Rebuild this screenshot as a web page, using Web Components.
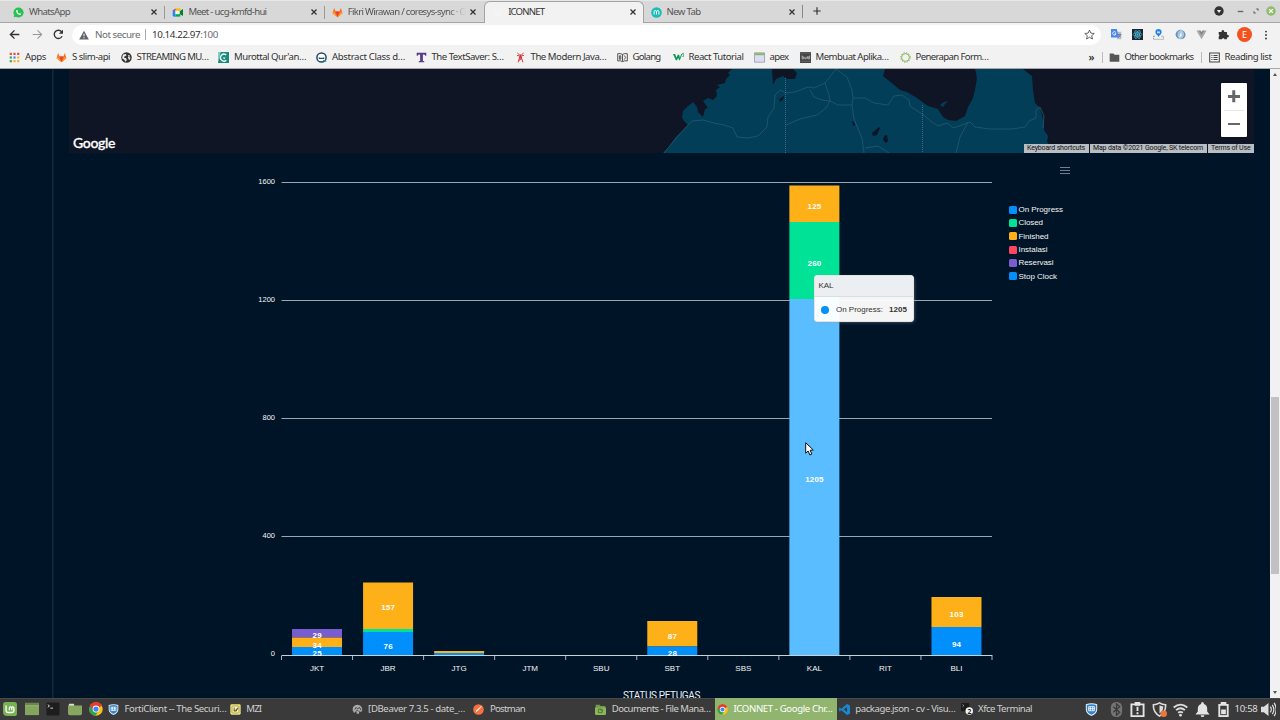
<!DOCTYPE html>
<html lang="en">
<head>
<meta charset="utf-8">
<title>ICONNET</title>
<style>
html,body{margin:0;width:1280px;height:720px;overflow:hidden;background:#001428}
body{font-family:"Noto Sans","Open Sans",sans-serif;font-size:9.6px}
</style>
</head>
<body>
<desktop-screen></desktop-screen>
<script>
const ICONS = {
whatsapp:'<circle cx="8" cy="8" r="7.4" fill="#25c351"/><path d="M1 15l1.200-4L5 14z" fill="#25c351"/><path d="M5.200 4.300c-.8.700-.9 1.800-.2 3.200 1 2 2.500 3.300 4.600 4 1.400.4 2.200-.5 2.100-1.700L9.900 8.900l-.8.900C7.900 9.300 7 8.400 6.400 7.200l.7-.9-.8-2z" fill="#fff"/>',
meet:'<path d="M1 5l4-3v12H3a2 2 0 0 1-2-2z" fill="#2684fc"/><path d="M5 2h7v4H5z" fill="#ffba00"/><path d="M1 5l4-3v3z" fill="#ea4335"/><path d="M5 10h7v4H5z" fill="#00ac47"/><path d="M11 6l5-3v10l-5-3z" fill="#00832d"/><path d="M5 5.500h6v5H5z" fill="#f3f3f3"/>',
gitlab:'<path d="M8 15L.8 9 3 1.500 5.400 6.700h5.200L13 1.500 15.200 9z" fill="#fc6d26"/><path d="M8 15L5.400 6.700h5.200z" fill="#e24329"/><path d="M.8 9l2-2 5.200 8zM15.200 9l-2-2L8 15z" fill="#fca326"/>',
vermillion:'<path d="M3 3l3 10 2-5 2 5 3-10" fill="none" stroke="#f7f7f7" stroke-width="1"/>',
mm:'<circle cx="8" cy="8" r="7.700" fill="#1abcb8"/><path d="M4.500 11V6.800q0-1.600 1.700-1.600T8 6.800V11M8 6.800q0-1.600 1.800-1.600t1.700 1.600V11" fill="none" stroke="#fff" stroke-width="1.400"/>',
x:'<path d="M4 4l8 8M12 4l-8 8" stroke="#333" stroke-width="2.100"/>',
plus:'<path d="M8 2v12M2 8h12" stroke="#333" stroke-width="1.900"/>',
down:'<circle cx="8" cy="8" r="7.500" fill="#333"/><path d="M4.500 6.500h7L8 11z" fill="#eee"/>',
min:'<path d="M4 8h8" stroke="#666" stroke-width="2"/>',
max:'<path d="M7.500 4H12v4.500zM8.500 12H4V7.500z" fill="#666"/>',
close:'<circle cx="8" cy="8" r="7.600" fill="#8fbd6a"/><path d="M5 5l6 6M11 5l-6 6" stroke="#fff" stroke-width="2.200"/>',
back:'<path d="M15 8H2.500M8 2L2 8l6 6" fill="none" stroke="#333" stroke-width="2"/>',
fwd:'<path d="M1 8h12.500M8 2l6 6-6 6" fill="none" stroke="#999" stroke-width="1.700"/>',
reload:'<path d="M13.200 10.500A6 6 0 1 1 12.500 4" fill="none" stroke="#333" stroke-width="2"/><path d="M14.500 1v6h-6z" fill="#333"/>',
warn:'<path d="M8 1l7.700 14H.3z" fill="#5f6368"/><path d="M8 6v4M8 11.500v1.800" stroke="#fff" stroke-width="1.600"/>',
star:'<path d="M8 1.500l2 4.500 4.900.5-3.700 3.300 1.100 4.800L8 12.100l-4.300 2.500 1.100-4.800L1.100 6.500 6 6z" fill="none" stroke="#555" stroke-width="1.300"/>',
translate:'<path d="M7 4h8v11H9z" fill="#b7bfc9"/><path d="M0 0h8.500l3 12.500H0z" fill="#4c88ed"/><path d="M7 5A2.500 2.500 0 1 0 7.300 7H5" fill="none" stroke="#fff" stroke-width="1.200"/><path d="M10 8h5M12.500 7v1M14 8q-1 3-3 4M11 9l3 3" stroke="#5b6b80" fill="none"/>',
react:'<path d="M0 0h16v16H0z" fill="#1f2330"/><g fill="none" stroke="#45c8e6" stroke-width="1"><ellipse cx="8" cy="8" rx="6.500" ry="2.500"/><ellipse cx="8" cy="8" rx="6.500" ry="2.500" transform="rotate(60 8 8)"/><ellipse cx="8" cy="8" rx="6.500" ry="2.500" transform="rotate(120 8 8)"/></g><circle cx="8" cy="8" r="1.300" fill="#45c8e6"/>',
pin:'<circle cx="8" cy="4.500" r="4.500" fill="#1d82e8"/><path d="M6 8.500h4l-2 3z" fill="#1d82e8"/><path d="M7 2.500v4M9 3v3.500M6 5h4" stroke="#fff" stroke-width=".9"/><path d="M.8 10.500h3M12 10.500h3.200M.8 10v5h14.400v-5" fill="none" stroke="#777" stroke-dasharray="2 1"/>',
swirl:'<circle cx="8" cy="8" r="7" fill="#a9c5dc"/><path d="M9 1C3 3 2 9 6 14 3 13 1 11 1 8s3-7 8-7zM10 2c5 3 4 10-2 13 6 0 8-5 7-8-.6-2.500-2-4-5-5z" fill="#5f94bd"/><path d="M9 4l-3 8 4-2z" fill="#eef6fb"/>',
vue:'<path d="M.5 2H5l3 5 3-5h4.500L8 14.800z" fill="#a8a8a8"/><path d="M4 2h2.600L8 4.400 9.400 2H12L8 9z" fill="#858585"/>',
puzzle:'<path d="M1 4.500h4.300a2 2 0 1 1 3.600 0H13v4a2 2 0 1 1 0 3.600V15H9.500a2 2 0 0 0-3.800 0H1v-4a2 2 0 0 0 0-3.500z" fill="#333"/>',
dots:'<g fill="#333"><circle cx="8" cy="2.500" r="1.500"/><circle cx="8" cy="8" r="1.500"/><circle cx="8" cy="13.500" r="1.500"/></g>',
apps:'<g><path d="M1 1h3.200v3.200H1zM6.400 1h3.200v3.200H6.400zM11.800 1H15v3.200h-3.200z" fill="#e35245"/><path d="M1 6.400h3.200v3.200H1z" fill="#36a852"/><path d="M6.400 6.400h3.200v3.200H6.400z" fill="#4688f1"/><path d="M11.800 6.400H15v3.200h-3.200zM6.400 11.800h3.200V15H6.400zM11.800 11.800H15V15h-3.200z" fill="#f0b52e"/><path d="M1 11.800h3.200V15H1z" fill="#36a852"/></g>',
globe:'<circle cx="8" cy="8" r="7.600" fill="#333"/><path d="M3 3.500l4-.5 1 2-3 1.500-.5 2 3 .5 1 2.500-2 2.500-2-3-3-2zM10 4l3 1-1 2.500 2 1-2 3.500-2-4 1-2z" fill="#ececec"/>',
quran:'<path d="M0 0h16v16H0z" fill="#20897c"/><path d="M0 16L4 0H0z" fill="#7fcfc3"/><path d="M12 4.500A5 5 0 1 0 12 12" fill="none" stroke="#e6fffa" stroke-width="2"/><path d="M7 8h4l-2 2.500z" fill="#fff"/>',
abs:'<circle cx="8" cy="8" r="6.700" fill="#fff" stroke="#254a68" stroke-width="2.200"/><path d="M4 7.500q4 2 8 0V10H4z" fill="#254a68"/><path d="M10 12l5 2" stroke="#2ba7a0" stroke-width="1.500"/>',
tee:'<path d="M1 1h14v4.500h-1.200Q13 3.500 10 3.700V13l2 .5V15H4v-1.500l2-.5V3.700Q3 3.500 2.200 5.500H1z" fill="#553a8c"/>',
tower:'<path d="M8 4L4.500 15M8 4l3.500 11M6 10h4M5.500 13l4-4M7 4.500L3.500 1.500M9 4.500l3.500-3M3 5l3 .5M13 5l-3 .5" stroke="#d9343d" stroke-width="1.400" fill="none"/><path d="M7 4h2l1 5H6z" fill="#d9343d"/>',
book:'<path d="M1 2.500q4-1 7 1 3-2 7-1v10.500q-4-1-7 1-3-2-7-1zM8 3.500V14M3.500 5.500h2v5h-2zM10.500 5l2 3-2 3" fill="none" stroke="#444" stroke-width="1.300"/>',
w3:'<path d="M0 3h3l2 5 2-4h2l1 4 2-5h1.500l-3.500 9H9L7.500 8.500 6 12H4z" fill="#14975a"/><path d="M13 2h2.500l-1 2h1v2.500h-2" fill="none" stroke="#14975a"/>',
win:'<path d="M.7 1.200h14.600v13.600H.7z" fill="#dcdcf8" stroke="#8b8b99"/><path d="M1.200 1.700h13.600v3H1.200z" fill="#85bb5d"/>',
mem:'<path d="M0 0h16v16H0z" fill="#454545"/><path d="M3 5v5h2V7H3M7 7v3h2V7M11 6v4M14 5v5h-2V7h2" fill="none" stroke="#ccc"/><path d="M0 1.500h16M0 13.500h16" stroke="#777"/>',
gear:'<circle cx="8" cy="8" r="5.700" fill="none" stroke="#7eac46" stroke-width="1.400"/><circle cx="8" cy="8" r="7.200" fill="none" stroke="#7eac46" stroke-width="1.300" stroke-dasharray="1.500 2.270"/>',
folder:'<path d="M1 2h5.500l1.500 2h7v10H1z" fill="#555"/>',
read:'<path d="M1 1.500h14v13H1z" fill="none" stroke="#444" stroke-width="1.500"/><path d="M3.500 5h1.500M3.500 8H5M3.500 11H5M6.500 5h6M6.500 8h6M6.500 11h6" stroke="#444" stroke-width="1.500"/>',
mint:'<path d="M3 0h10q3 0 3 3v10q0 3-3 3H5q-5 0-5-5V3q0-3 3-3z" fill="#78b052"/><path d="M3.500 4v5.500q0 2.500 2.500 2.500h4q2.500 0 2.500-2.500V7q0-1.500-1.300-1.500T10 7v2.500M10 7q0-1.500-1.300-1.500T7.300 7v2.500" fill="none" stroke="#fff" stroke-width="1.500"/>',
desk:'<path d="M0 1h16v14H0z" fill="#83a55d"/><path d="M0 1h16v3H0z" fill="#68874a"/><path d="M0 4h16v.8H0z" fill="#a6c285"/>',
term:'<rect width="16" height="16" rx="1.500" fill="#1d1d1d" stroke="#555" stroke-width=".6"/><path d="M2 3l2 1.500L2 6M5 7h3" fill="none" stroke="#eee" stroke-width="1"/>',
files:'<path d="M1 2h6v3H1z" fill="#d9e4cf"/><path d="M0 4h16v9q0 2-2 2H2q-2 0-2-2z" fill="#87a760"/>',
chrome:'<circle cx="8" cy="8" r="7.700" fill="#fbc116"/><path d="M8 8L1.300 4.200A7.700 7.700 0 0 1 14.700 4.200z" fill="#e33b2e"/><path d="M8 8L1.300 4.200A7.700 7.700 0 0 0 7.500 15.700L11 9.500z" fill="#31a350"/><path d="M8 4.500h6.800a7.700 7.700 0 0 0-13.500-.3L5 10z" fill="#e33b2e"/><circle cx="8" cy="8" r="3.900" fill="#fff"/><circle cx="8" cy="8" r="3" fill="#4285f4"/>',
forti:'<path d="M1 1.500Q8-1 15 1.500V8q0 5-7 8-7-3-7-8z" fill="#e9f2fb"/><path d="M2.200 2.500Q8 .5 13.800 2.500V8q0 4-5.800 6.500Q2.200 12 2.200 8z" fill="#3584cb"/><path d="M4.500 4.500h7v5h-7zM6.500 4.500v5M9.500 4.500v5M4.500 7h7" stroke="#fff" fill="none"/>',
mzi:'<rect x=".5" y=".5" width="15" height="15" rx="2" fill="#f4e77d"/><rect x="3" y="3" width="10" height="10" rx="1" fill="#fffad1" stroke="#8d812d"/><path d="M6 5v5h3l3-5M9 7v4" fill="none" stroke="#665d20" stroke-width="1.500"/>',
dbeaver:'<path d="M1 9q-1-7 7-8 7 1 7 8l-2 3-2-2-1 4H7l-1-4-3 3z" fill="#aaa"/><path d="M4 8l2-3 2 2 3-2 2 4M6 10l2-1 2 2" stroke="#3b3b3b" stroke-width="1.300" fill="none"/>',
postman:'<circle cx="8" cy="8" r="7.700" fill="#f47140"/><path d="M4 12l1-3 7-6 .7.700-5.700 6z" fill="#fff"/>',
docs:'<path d="M1 1h6l1 2h7v12H1z" fill="#719c47"/><path d="M0 5h16v9q0 2-2 2H2q-2 0-2-2z" fill="#8ab65b"/><path d="M5 7.500h5.500v5H5zM7 7.500l4 3" fill="none" stroke="#496f2c" stroke-width="1.200"/>',
vscode:'<path d="M11.500 0L16 2v12l-4.500 2-8-7L1 11 0 10V6l1-1 2.500 2z" fill="#1788d1"/><path d="M11.700 4.500v7L7 8zM1 7l1.200 1L1 9z" fill="#3a3a3a"/>',
term2:'<rect width="11" height="11" rx="1" fill="#1c1c1c"/><path d="M2 2l2 1.500L2 5" stroke="#aaa" fill="none"/><circle cx="11" cy="10.800" r="5" fill="#f4f4f4"/><text x="8.500" y="14" font-size="9" font-weight="bold" fill="#222" font-family="Noto Sans">2</text>',
bt:'<rect x="2" y="0" width="12" height="16" rx="5.500" fill="#747474"/><path d="M4.500 5l7 6L8 14V2l3.500 3-7 6" fill="none" stroke="#393939" stroke-width="1.300"/>',
clip:'<path d="M1.500 2.500h13v12.500h-13z" fill="none" stroke="#e5e5e5" stroke-width="2"/><path d="M5 0h6v4H5z" fill="#e5e5e5"/><path d="M8 5v4.500M8 11v2" stroke="#e5e5e5" stroke-width="2"/>',
shield:'<path d="M8 1Q11 3 14.500 3 15 11 8 15 1 11 1.500 3 5 3 8 1z" fill="none" stroke="#ddd" stroke-width="1.700"/><path d="M8 3.500q2 1 4 1.200Q12 10 8 12z" fill="#ddd"/><circle cx="12.500" cy="12.500" r="3.500" fill="#ef7839"/>',
wifi:'<g fill="none" stroke="#ddd" stroke-width="2"><path d="M.7 5.800q7.300-6 14.600 0"/><path d="M3.300 8.700q4.700-4 9.400 0" /><path d="M5.500 11.500q2.500-2 5 0"/></g><circle cx="8" cy="14" r="1.500" fill="#ddd"/>',
bell:'<path d="M8 0q1.500 0 1.500 2Q13 3 13 7v3l2.500 3.200H.5L3 10V7q0-4 3.500-5Q6.500 0 8 0zM6 14h4q0 2-2 2t-2-2z" fill="#e4e4e4"/>',
batt:'<path d="M5 0h6v2h2.500v14h-11V2H5z" fill="#e4e4e4"/><path d="M4.500 4h7v10h-7z" fill="#3a3a3a"/><path d="M5.500 8h5v5h-5z" fill="#e4e4e4"/>',
vol:'<path d="M0 5h3l5-4v14l-5-4H0z" fill="#ddd"/><path d="M10 5q2 3 0 6M12 3q3.500 5 0 10M14 1q4.500 7 0 14" fill="none" stroke="#ddd" stroke-width="1.300"/>'
};

const define = (name, render, after) => customElements.define(name, class extends HTMLElement {
  connectedCallback(){
    if (this.shadowRoot) return;
    this.attachShadow({mode:'open'}).innerHTML = render(this);
    if (after) after(this);
  }
});
const fitted = [];

/* Line of text spaced out to a given width. */
define('fit-text', el => `<style>:host{display:block;flex:none;width:${el.getAttribute('w')}px;white-space:nowrap;line-height:14px}span{display:inline-block}</style><span><slot></slot></span>`, el => fitted.push(el));

define('ui-icon', el => {
  const s = el.getAttribute('size') || 12;
  return `<style>:host{display:block;flex:none;width:${s}px;height:${s}px}svg{display:block}</style><svg width="${s}" height="${s}" viewBox="0 0 16 16">${ICONS[el.getAttribute('name')]}</svg>`;
});

define('browser-tab', el => `<style>
:host{display:flex;align-items:center;box-sizing:border-box;width:159.400px;height:22px;padding:0 5px 0 7px;color:#555;border-right:1px solid transparent;border-image:linear-gradient(transparent 5px,${el.hasAttribute('bare')?'transparent':'#999'} 5px,${el.hasAttribute('bare')?'transparent':'#999'} 18px,transparent 18px) 0 1 0 0}
:host([active]){border-image:none;border:1px solid #a3a3a3;border-bottom:0;border-radius:6px 6px 0 0;background:#f2f2f2;height:23px;padding:0 5px 2px 7px;color:#333}
fit-text{margin-left:5px}.c{margin-left:auto}
.fade{-webkit-mask:linear-gradient(90deg,#000 85%,transparent)}
</style><ui-icon name="${el.getAttribute('icon')}" size="11"></ui-icon><fit-text class="${el.hasAttribute('fade')?'fade':''}" w="${el.getAttribute('w')}">${el.getAttribute('label')}</fit-text><ui-icon class="c" name="x" size="10"></ui-icon>`);

define('tab-strip', () => `<style>
:host{display:flex;box-sizing:border-box;height:23px;background:#d8d8d8;border-top:1px solid #e7e7e7;box-shadow:inset 0 -1px #a6a6a6;padding-left:6px;align-items:flex-start}
.sep{width:1px;height:13px;background:#888;margin:4px 8.500px 0 -.5px}.plus{margin-top:5px}
.wm{display:flex;align-items:center;margin-left:auto;height:20px;padding-right:4.500px}
</style>
<browser-tab icon="whatsapp" label="WhatsApp" w="41"></browser-tab>
<browser-tab icon="meet" label="Meet - ucg-kmfd-hui" w="78"></browser-tab>
<browser-tab icon="gitlab" label="Fikri Wirawan / coresys-sync · G" w="118" fade bare></browser-tab>
<browser-tab icon="vermillion" label="ICONNET" w="36" active></browser-tab>
<browser-tab icon="mm" label="New Tab" w="34" bare></browser-tab>
<div class="sep"></div><ui-icon class="plus" name="plus" size="10"></ui-icon>
<div class="wm"><ui-icon name="down" size="10"></ui-icon><ui-icon name="min" size="11" style="margin-left:11px"></ui-icon><ui-icon name="max" size="10" style="margin-left:5px"></ui-icon><ui-icon name="close" size="10" style="margin-left:5px"></ui-icon></div>`);

define('address-bar', () => `<style>
:host{display:flex;box-sizing:border-box;height:23px;align-items:center;background:#f2f2f2;padding:0 0 0 9px}
.f{margin-left:12px}.r{margin-left:10px}
.omni{display:flex;align-items:center;box-sizing:border-box;width:1029px;height:20px;margin-left:8px;border-radius:10px;background:#fff;padding:0 6px 0 7px;color:#6b6b6b;font-size:9.800px}
.s{width:1px;height:11px;background:#aaa;margin:0 6px 0 5px}.omni b{font-weight:400;color:#333}
.omni fit-text:first-of-type{margin-left:6px}
.st{margin-left:auto}
.ext{display:flex;align-items:center;padding-left:4.500px}.ext>*{width:21.400px;display:flex;justify-content:center}
.av{width:15px;height:15px;border-radius:50%;background:#f4511e;color:#fff;display:flex;align-items:center;justify-content:center;font-size:9px}
</style>
<ui-icon name="back" size="11"></ui-icon><ui-icon class="f" name="fwd" size="11"></ui-icon><ui-icon class="r" name="reload" size="11"></ui-icon>
<div class="omni"><ui-icon name="warn" size="10"></ui-icon><fit-text w="45">Not secure</fit-text><div class="s"></div><fit-text w="66"><b>10.14.22.97</b>:100</fit-text><ui-icon class="st" name="star" size="11"></ui-icon></div>
<div class="ext">${['translate','react','pin','swirl','vue','puzzle'].map(n=>`<div><ui-icon name="${n}" size="11"></ui-icon></div>`).join('')}<div><span class="av">E</span></div><div><ui-icon name="dots" size="10"></ui-icon></div></div>`);

define('book-mark', el => `<style>:host{display:flex;align-items:center;flex:none;width:${el.getAttribute('span')}px}fit-text{margin-left:5px}</style><ui-icon name="${el.getAttribute('icon')}" size="11"></ui-icon><fit-text w="${el.getAttribute('w')}">${el.getAttribute('label')}</fit-text>`);

const MARKS = [['apps','Apps',21,47],['gitlab','S slim-api',38,64.500],['globe','STREAMING MU…',72,97.500],['quran',"Murottal Qur'an…",72,98],['abs','Abstract Class d…',73,99.500],['tee','The TextSaver: S…',72,99],['tower','The Modern Java…',76,102],['book','Golang',28,56],['w3','React Tutorial',55,81],['win','apex',19,46],['mem','Membuat Aplika…',73,100],['gear','Penerapan Form…',73,189]];
define('bookmark-bar', () => `<style>
:host{display:flex;box-sizing:border-box;height:23px;align-items:center;background:#f2f2f2;padding-left:9px;color:#333;border-bottom:1px solid #a8a8a8}
.s{width:1px;height:11px;background:#bbb}
</style>${MARKS.map(m=>`<book-mark icon="${m[0]}" label="${m[1]}" w="${m[2]}" span="${m[3]}"></book-mark>`).join('')}<fit-text w="7" style="font-weight:600;font-size:10.500px;margin-right:6px">»</fit-text><div class="s"></div><book-mark style="margin-left:6px" icon="folder" label="Other bookmarks" w="69" span="92"></book-mark><div class="s"></div><book-mark style="margin-left:7px" icon="read" label="Reading list" w="47" span="66"></book-mark>`);

define('map-panel', () => `<style>
:host{display:grid;height:84px;background:#0f1524;overflow:hidden}
:host>*{grid-area:1/1}
svg{display:block}
.logo{align-self:end;justify-self:start;margin:0 0 0 4px;font:500 14px/20px "Lato",sans-serif;color:#fff;-webkit-text-stroke:.3px #fff}
.zoom{justify-self:end;align-self:start;display:flex;flex-direction:column;align-items:center;margin:14px 7px 0 0;width:26px;height:54px;background:#fff;border-radius:1px;box-shadow:0 0 2px #0008}
.zoom span{flex:1;width:12px;display:grid;align-items:center}
.zoom i{width:20px;height:1px;background:#e6e6e6}
.h,.v{grid-area:1/1;background:#666;width:12px;height:2.500px}
.v{transform:rotate(90deg)}
.legal{justify-self:end;align-self:end;display:flex;gap:1px;font:7px/9px Roboto,sans-serif;color:#111}
.legal span{background:#b7bdc2;height:9px;padding:0 3.500px;display:flex;align-items:center}.legal fit-text{line-height:9px;height:9px}
</style>
<svg width="1185" height="84" viewBox="69 69 1185 84">
<path fill="#023e58" d="M663 153L669 147 675 138 680 133 685 128 688 125 684 121 682 118 683 111 687 107 693 102 697 107 698 112 703 117 705 109 708 108 703 101 708 98 713 100 717 96 716 90 720 87 717 85 725 83 726 79 730 75 728 73 732 69H772L773 85 776 79 783 76 787 79 795 79 797 73 793 69H885L883 76 893 84 900 90 907 92 917 98 928 106 938 109 943 117 948 120 956 121 965 116 968 107 973 98 975 90 977 78 975 69H1023L1032 76 1033 90 1035 103 1040 108 1044 123 1044 130 1048 136 1047 142 1052 147V153z"/>
<path fill="#0f1524" d="M779 99l5-3-1 4-3 2zM872 133l7-6 1 1-3 7-4 1zM884 136l3-1 1 6-2 2-3-3zM852 121l2 1 1 3-2 1z"/><path d="M940 105l4-3 4-1-3 3-2 3z" fill="#023e58"/>
<g fill="none" stroke="#235a70" stroke-width=".8"><path d="M664 153L678 136 688 125 692 121 703 120 714 123 724 125 733 128 737 137 748 138 758 136 767 127 768 117 774 108 775 95 780 90 786 93 795 92 808 87 814 88 825 83 836 69 847 77 852 90 853 98 865 98 874 103 888 105 894 96 902 95 909 100 910 106 922 114 932 122 938 126 947 123 953 128 965 124 970 122 975 127 990 129 1012 129 1025 127 1029 121 1036 118 1036 110 1040 107 1044 116 1043 128"/><path d="M825 83L829 95 830 101 822 100 814 97 810 90M830 101L826 108 817 115 800 119 786 125M830 101L838 105 852 105 853 98M852 105L854 119 862 138 864 153M865 148L878 146 889 153M968 122L960 137 956 153"/><path stroke="#4d7789" stroke-dasharray="1 1" d="M785.500 78v75M922.500 105v48"/></g>
</svg>
<div class="logo"><fit-text w="42" style="line-height:20px">Google</fit-text></div>
<div class="zoom"><span><b class="h"></b><b class="v"></b></span><i></i><span><b class="h"></b></span></div>
<div class="legal"><span><fit-text w="58">Keyboard shortcuts</fit-text></span><span><fit-text w="110">Map data ©2021 Google, SK telecom</fit-text></span><span><fit-text w="39.500">Terms of Use</fit-text></span></div>`);

const C = {blue:'#008ffb',green:'#00e396',orange:'#feb019',red:'#ff4560',purple:'#775dd0',hover:'#5abdff'};
const CATS = ['JKT','JBR','JTG','JTM','SBU','SBT','SBS','KAL','RIT','BLI'];
/* [category index, top, bottom, colour, label, label baseline] */
const BARS = [[0,629,637.500,'purple',29,638],[0,637.500,647,'orange',34,647.500],[0,647,655,'blue',25,656],
[1,582.500,629,'orange',157,610],[1,629,632,'green'],[1,632,655,'blue',76,649],
[2,651,653,'orange'],[2,653,655,'blue'],
[5,621,646.500,'orange',87,639],[5,646.500,655,'blue',28,655.500],
[7,185.500,222,'orange',125,209],[7,222,299,'green',260,265.500],[7,299,655,'hover',1205,482],
[9,597,627,'orange',103,617],[9,627,655,'blue',94,646.500]];
define('status-chart', () => {
  const step = 71.050, mid = i => 281.500 + step*(i+.5);
  return `<style>
:host{display:grid;grid-template-columns:1fr;height:545px;font-family:"Liberation Sans",Arial,sans-serif}
:host>*{grid-area:1/1}svg{display:block}
.legend{justify-self:start;align-self:start;margin:50.500px 0 0 939.500px;display:flex;flex-direction:column;color:#f4f4f4;font-size:8px}
.legend div{display:flex;height:13.300px;align-items:center;gap:2px}.legend i{width:8px;height:8px;border-radius:1.500px;margin-top:-1px}
.tip{position:absolute;left:814px;top:275px;width:100px;height:47px;box-sizing:border-box;border-radius:3px;background:#fffffff5;border:1px solid #e3e3e3;box-shadow:1px 1px 4px -2px #999;color:#333;font-size:8px;overflow:hidden}
.tip header{height:20px;background:#eceff1;border-bottom:1px solid #ddd;padding-left:3.500px;display:flex;align-items:center}
.tip div{display:flex;align-items:center;height:25px;padding-left:6px}.tip i{width:8px;height:8px;border-radius:50%;background:#008ffb;margin-right:7px}
.title{justify-self:start;align-self:end;margin-left:554px;height:9px;color:#eee;font:10px/14px Roboto,sans-serif}
.cursor{position:absolute;left:805px;top:442px}
</style>
<svg width="1185" height="545" viewBox="69 153 1185 545">
<g stroke="#9aa6b0" stroke-width="1">${[182.500,300.500,418.500,536.500].map(y=>`<path d="M281.500 ${y}H992"/>`).join('')}</g>
${BARS.map(b=>`<rect x="${mid(b[0])-25}" y="${b[1]}" width="50" height="${b[2]-b[1]}" fill="${C[b[3]]}"/>`).join('')}
<path d="M281.500 655.500H992.500" stroke="#c8d2da"/>
<g stroke="#aab4bd">${Array.from({length:11},(_,i)=>`<path d="M${281.500+i*step} 656v4"/>`).join('')}</g>
<g fill="#fff" font-size="8" font-weight="bold" text-anchor="middle">${BARS.filter(b=>b[4]).map(b=>`<text x="${mid(b[0])}" y="${b[5]}" textLength="${String(b[4]).length*4.600}">${b[4]}</text>`).join('')}</g>
<g fill="#f4f4f4" font-size="7.500" text-anchor="end">${[1600,1200,800,400,0].map((v,i)=>`<text x="275" y="${183.800+i*118.100}">${v}</text>`).join('')}</g>
<g fill="#f4f4f4" font-size="8" text-anchor="middle">${CATS.map((c,i)=>`<text x="${mid(i)}" y="671.300">${c}</text>`).join('')}</g>
<path d="M1060 167.500h10M1060 170.500h10M1060 173.500h10" stroke="#6e8192" stroke-width="1"/>
</svg>
<div class="legend">${[['blue','On Progress',44.500],['green','Closed',24.500],['orange','Finished',30],['red','Instalasi',29],['purple','Reservasi',35],['blue','Stop Clock',38.500]].map(l=>`<div><i style="background:${C[l[0]]}"></i><fit-text w="${l[2]}">${l[1]}</fit-text></div>`).join('')}</div>
<div class="title"><fit-text w="77">STATUS PETUGAS</fit-text></div>
<div class="tip"><header><fit-text w="15">KAL</fit-text></header><div><i></i><fit-text w="47">On Progress:</fit-text><fit-text w="18" style="margin-left:6px;font-weight:bold">1205</fit-text></div></div>
<svg class="cursor" width="10" height="14" viewBox="0 0 10 14"><path d="M.7.700v10.500l2.400-2.200 1.800 4 2-1-1.800-3.700 3.200-.3z" fill="#fff" stroke="#111" stroke-width="1"/></svg>`;
});

define('dashboard-page', () => `<style>
:host{display:grid;grid-template-columns:52px 1px 1fr 10px;height:629px;background:#001428}
.line{background:#12283c;box-shadow:1px 0 #0b2034}
main{padding:0 16px}
.sb{display:flex;flex-direction:column;align-items:center;background:#f1f1f1}
.t{height:177px;width:8px;background:#c1c1c1;margin-top:321px}
.u,.d{border:2.500px solid transparent}
.u{border-bottom:3px solid #555;border-top:0;margin-top:4px}.d{border-top:3px solid #555;border-bottom:0;margin:auto 0 4px}
</style><div></div><div class="line"></div><main><map-panel></map-panel><status-chart></status-chart></main><div class="sb"><div class="u"></div><div class="t"></div><div class="d"></div></div>`);

define('task-item', el => `<style>:host{display:flex;align-items:center;box-sizing:border-box;flex:none;width:121.800px;height:22px;padding:0 0 0 1.500px;color:#d0d0d0}:host([active]){background:#91b56e;color:#fff}fit-text{margin-left:5.500px}</style><ui-icon name="${el.getAttribute('icon')}" size="${el.getAttribute('icon')==='term2'?12:11}"></ui-icon><fit-text w="${el.getAttribute('w')}">${el.getAttribute('label')}</fit-text>`);

define('task-bar', () => `<style>
:host{display:flex;align-items:center;height:22px;background:#3a3a3a;box-shadow:inset 0 1px #4a4a4a;overflow:hidden;color:#ddd;position:relative}
.l{display:flex;padding-left:3px;width:103px;gap:7.500px;box-sizing:content-box}
.tasks{display:flex;width:970px;margin-left:.5px}
.tray{display:flex;align-items:center;flex:1;height:22px}
.tray>div{width:21.500px;display:flex;justify-content:center}
</style>
<div class="l">${['mint','desk','term','files','chrome'].map(n=>`<ui-icon name="${n}" size="14"></ui-icon>`).join('')}</div>
<div class="tasks">${[['forti','FortiClient -- The Securi…',102],['mzi','MZI',15],['dbeaver','[DBeaver 7.3.5 - date_…',97],['postman','Postman',35],['docs','Documents - File Mana…',99],['chrome','ICONNET - Google Chr…',99],['vscode','package.json - cv - Visu…',100],['term2','Xfce Terminal',54]].map((t,i)=>`<task-item icon="${t[0]}" label="${t[1]}" w="${t[2]}" ${i===5?'active':''}></task-item>`).join('')}</div>
<div class="tray"><div style="width:29px"><ui-icon name="forti" size="13"></ui-icon></div>${['bt','clip','shield','wifi','bell','batt'].map(n=>`<div><ui-icon name="${n}" size="15"></ui-icon></div>`).join('')}<fit-text w="23" style="margin:0 3px 0 0">10:58</fit-text><ui-icon name="vol" size="15"></ui-icon></div>`);

define('desktop-screen', () => `<style>
:host{display:flex;flex-direction:column;width:1280px;height:720px;overflow:hidden;position:relative}
:host>*{flex:none}
</style><tab-strip></tab-strip><address-bar></address-bar><bookmark-bar></bookmark-bar><dashboard-page></dashboard-page><task-bar></task-bar>`);

for (const el of fitted) {
  const s = el.shadowRoot.querySelector('span');
  const n = el.textContent.length;
  s.style.letterSpacing = (Number(el.getAttribute('w')) - s.getBoundingClientRect().width) / n + 'px';
}
</script>
</body>
</html>
